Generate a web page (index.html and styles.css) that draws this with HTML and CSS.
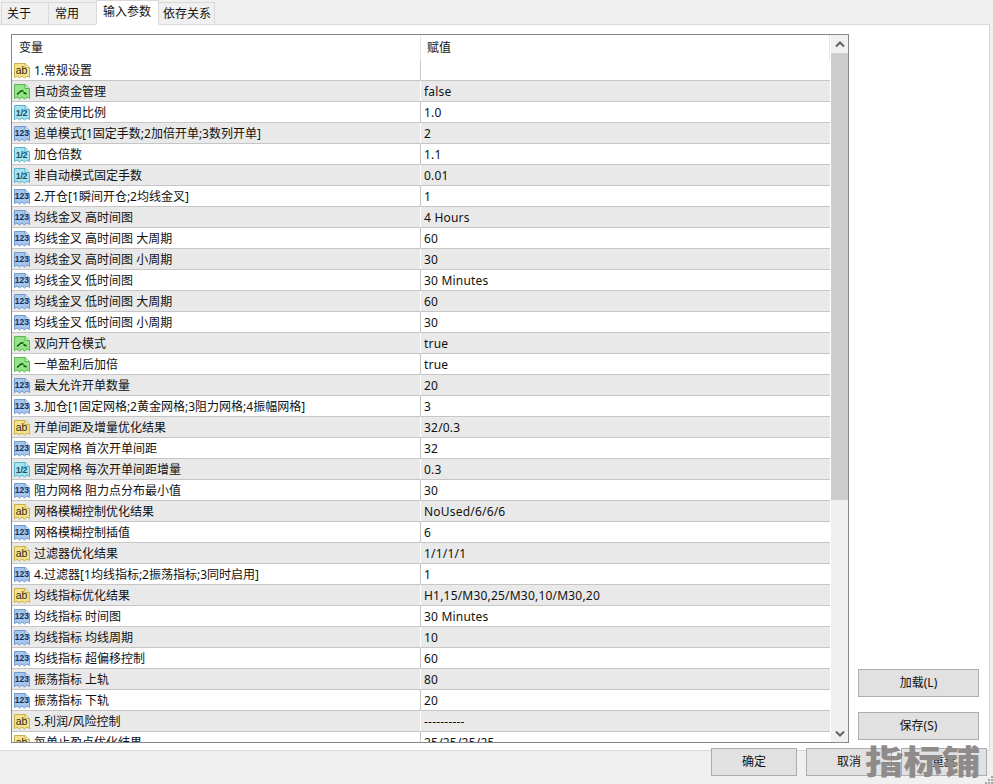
FILE: index.html
```html
<!DOCTYPE html>
<html lang="zh">
<head>
<meta charset="utf-8">
<title>输入参数</title>
<link rel="stylesheet" href="styles.css">
</head>
<body>
<svg class="defs" width="0" height="0">
  <defs>
    <symbol id="doc" viewBox="0 0 16 17"><path d="M0.5 1.5 H11 L15.5 5.5 V15.5 L13 14 L10.5 16 L8 14 L5.5 16 L3 14 L0.5 15.5 Z"/><path class="fold" d="M11 1.5 V5.5 H15.5"/></symbol>
  </defs>
</svg>
<nav class="tabs">
  <div class="tab">关于</div>
  <div class="tab">常用</div>
  <div class="tab active">输入参数</div>
  <div class="tab">依存关系</div>
</nav>
<main class="panel">
  <section class="list">
    <div class="rows">
      <div class="head"><div class="hname">变量</div><div class="hval">赋值</div></div>
      <div class="row"><svg class="ic ab" viewBox="0 0 16 17"><use href="#doc"/><text x="7.5" y="12">ab</text></svg><span class="name">1.常规设置</span><span class="val"></span></div>
      <div class="row"><svg class="ic bo" viewBox="0 0 16 17"><use href="#doc"/><path class="sw" d="M3 11.5 L7 8 H9.5 M9.5 9.5 L12.5 11"/></svg><span class="name">自动资金管理</span><span class="val">false</span></div>
      <div class="row"><svg class="ic fr" viewBox="0 0 16 17"><use href="#doc"/><text x="7.5" y="11.5">1/2</text></svg><span class="name">资金使用比例</span><span class="val">1.0</span></div>
      <div class="row"><svg class="ic nu" viewBox="0 0 16 17"><use href="#doc"/><text x="7.8" y="11">123</text></svg><span class="name">追单模式[1固定手数;2加倍开单;3数列开单]</span><span class="val">2</span></div>
      <div class="row"><svg class="ic fr" viewBox="0 0 16 17"><use href="#doc"/><text x="7.5" y="11.5">1/2</text></svg><span class="name">加仓倍数</span><span class="val">1.1</span></div>
      <div class="row"><svg class="ic fr" viewBox="0 0 16 17"><use href="#doc"/><text x="7.5" y="11.5">1/2</text></svg><span class="name">非自动模式固定手数</span><span class="val">0.01</span></div>
      <div class="row"><svg class="ic nu" viewBox="0 0 16 17"><use href="#doc"/><text x="7.8" y="11">123</text></svg><span class="name">2.开仓[1瞬间开仓;2均线金叉]</span><span class="val">1</span></div>
      <div class="row"><svg class="ic nu" viewBox="0 0 16 17"><use href="#doc"/><text x="7.8" y="11">123</text></svg><span class="name">均线金叉 高时间图</span><span class="val">4 Hours</span></div>
      <div class="row"><svg class="ic nu" viewBox="0 0 16 17"><use href="#doc"/><text x="7.8" y="11">123</text></svg><span class="name">均线金叉 高时间图 大周期</span><span class="val">60</span></div>
      <div class="row"><svg class="ic nu" viewBox="0 0 16 17"><use href="#doc"/><text x="7.8" y="11">123</text></svg><span class="name">均线金叉 高时间图 小周期</span><span class="val">30</span></div>
      <div class="row"><svg class="ic nu" viewBox="0 0 16 17"><use href="#doc"/><text x="7.8" y="11">123</text></svg><span class="name">均线金叉 低时间图</span><span class="val">30 Minutes</span></div>
      <div class="row"><svg class="ic nu" viewBox="0 0 16 17"><use href="#doc"/><text x="7.8" y="11">123</text></svg><span class="name">均线金叉 低时间图 大周期</span><span class="val">60</span></div>
      <div class="row"><svg class="ic nu" viewBox="0 0 16 17"><use href="#doc"/><text x="7.8" y="11">123</text></svg><span class="name">均线金叉 低时间图 小周期</span><span class="val">30</span></div>
      <div class="row"><svg class="ic bo" viewBox="0 0 16 17"><use href="#doc"/><path class="sw" d="M3 11.5 L7 8 H9.5 M9.5 9.5 L12.5 11"/></svg><span class="name">双向开仓模式</span><span class="val">true</span></div>
      <div class="row"><svg class="ic bo" viewBox="0 0 16 17"><use href="#doc"/><path class="sw" d="M3 11.5 L7 8 H9.5 M9.5 9.5 L12.5 11"/></svg><span class="name">一单盈利后加倍</span><span class="val">true</span></div>
      <div class="row"><svg class="ic nu" viewBox="0 0 16 17"><use href="#doc"/><text x="7.8" y="11">123</text></svg><span class="name">最大允许开单数量</span><span class="val">20</span></div>
      <div class="row"><svg class="ic nu" viewBox="0 0 16 17"><use href="#doc"/><text x="7.8" y="11">123</text></svg><span class="name">3.加仓[1固定网格;2黄金网格;3阻力网格;4振幅网格]</span><span class="val">3</span></div>
      <div class="row"><svg class="ic ab" viewBox="0 0 16 17"><use href="#doc"/><text x="7.5" y="12">ab</text></svg><span class="name">开单间距及增量优化结果</span><span class="val">32/0.3</span></div>
      <div class="row"><svg class="ic nu" viewBox="0 0 16 17"><use href="#doc"/><text x="7.8" y="11">123</text></svg><span class="name">固定网格 首次开单间距</span><span class="val">32</span></div>
      <div class="row"><svg class="ic fr" viewBox="0 0 16 17"><use href="#doc"/><text x="7.5" y="11.5">1/2</text></svg><span class="name">固定网格 每次开单间距增量</span><span class="val">0.3</span></div>
      <div class="row"><svg class="ic nu" viewBox="0 0 16 17"><use href="#doc"/><text x="7.8" y="11">123</text></svg><span class="name">阻力网格 阻力点分布最小值</span><span class="val">30</span></div>
      <div class="row"><svg class="ic ab" viewBox="0 0 16 17"><use href="#doc"/><text x="7.5" y="12">ab</text></svg><span class="name">网格模糊控制优化结果</span><span class="val">NoUsed/6/6/6</span></div>
      <div class="row"><svg class="ic nu" viewBox="0 0 16 17"><use href="#doc"/><text x="7.8" y="11">123</text></svg><span class="name">网格模糊控制插值</span><span class="val">6</span></div>
      <div class="row"><svg class="ic ab" viewBox="0 0 16 17"><use href="#doc"/><text x="7.5" y="12">ab</text></svg><span class="name">过滤器优化结果</span><span class="val">1/1/1/1</span></div>
      <div class="row"><svg class="ic nu" viewBox="0 0 16 17"><use href="#doc"/><text x="7.8" y="11">123</text></svg><span class="name">4.过滤器[1均线指标;2振荡指标;3同时启用]</span><span class="val">1</span></div>
      <div class="row"><svg class="ic ab" viewBox="0 0 16 17"><use href="#doc"/><text x="7.5" y="12">ab</text></svg><span class="name">均线指标优化结果</span><span class="val">H1,15/M30,25/M30,10/M30,20</span></div>
      <div class="row"><svg class="ic nu" viewBox="0 0 16 17"><use href="#doc"/><text x="7.8" y="11">123</text></svg><span class="name">均线指标 时间图</span><span class="val">30 Minutes</span></div>
      <div class="row"><svg class="ic nu" viewBox="0 0 16 17"><use href="#doc"/><text x="7.8" y="11">123</text></svg><span class="name">均线指标 均线周期</span><span class="val">10</span></div>
      <div class="row"><svg class="ic nu" viewBox="0 0 16 17"><use href="#doc"/><text x="7.8" y="11">123</text></svg><span class="name">均线指标 超偏移控制</span><span class="val">60</span></div>
      <div class="row"><svg class="ic nu" viewBox="0 0 16 17"><use href="#doc"/><text x="7.8" y="11">123</text></svg><span class="name">振荡指标 上轨</span><span class="val">80</span></div>
      <div class="row"><svg class="ic nu" viewBox="0 0 16 17"><use href="#doc"/><text x="7.8" y="11">123</text></svg><span class="name">振荡指标 下轨</span><span class="val">20</span></div>
      <div class="row"><svg class="ic ab" viewBox="0 0 16 17"><use href="#doc"/><text x="7.5" y="12">ab</text></svg><span class="name">5.利润/风险控制</span><span class="val">----------</span></div>
      <div class="row"><svg class="ic ab" viewBox="0 0 16 17"><use href="#doc"/><text x="7.5" y="12">ab</text></svg><span class="name">每单止盈点优化结果</span><span class="val">25/25/25/25</span></div>
    </div>
    <div class="scrollbar">
      <div class="sbtn"><svg width="10" height="7" viewBox="0 0 10 7"><path d="M1 5.5 L5 1.5 L9 5.5" /></svg></div>
      <div class="track"><div class="thumb"></div></div>
      <div class="sbtn"><svg width="10" height="7" viewBox="0 0 10 7"><path d="M1 1.5 L5 5.5 L9 1.5" /></svg></div>
    </div>
  </section>
  <aside class="side">
    <button class="btn wide">加载(L)</button>
    <button class="btn wide">保存(S)</button>
  </aside>
</main>
<footer class="foot">
  <button class="btn act">确定</button>
  <button class="btn act">取消</button>
  <button class="btn act">重置</button>
</footer>
<div class="mark">指标铺</div>
<svg class="grip" width="8" height="8" viewBox="0 0 8 8"><path d="M6 0h2v2h-2z M3 3h2v2h-2z M6 3h2v2h-2z M0 6h2v2h-2z M3 6h2v2h-2z M6 6h2v2h-2z"/></svg>
</body>
</html>
```
FILE: styles.css
```css
* { box-sizing: border-box; }
html, body { margin: 0; height: 784px; overflow: hidden; }
body {
  position: relative;
  display: flex;
  flex-direction: column;
  background: #f0f0f0;
  color: #111;
  font: 12px/16px "Noto Sans", "Noto Sans CJK SC", sans-serif;
}
.defs { position: absolute; }
.tabs { display: flex; height: 25px; padding: 2px 0 0 1px; flex: none; }
.tab {
  height: 23px;
  padding: 3px 0 0 6px;
  background: #f0f0f0;
  border: 1px solid #d9d9d9;
  border-bottom: 0;
  margin-left: -1px;
  white-space: nowrap;
}
.tab:nth-child(1) { width: 48px; margin-left: 0; padding-left: 5px; }
.tab:nth-child(2) { width: 49px; }
.tab:nth-child(3) { width: 63px; }
.tab:nth-child(4) { width: 57px; padding-left: 4px; }
.tab.active {
  position: relative;
  height: 25px;
  margin-top: -2px;
  background: #fff;
  padding: 3px 0 0 6px;
  border-bottom: 1px solid #fff;
  z-index: 1;
}
.panel {
  height: 727px;
  width: 990px;
  flex: none;
  display: flex;
  margin-top: -1px;
  padding: 9px 10px 7px 11px;
  background: #fff;
  border: 1px solid #d9d9d9;
  border-left: 0;
}
.list {
  width: 838px;
  height: 709px;
  flex: none;
  display: flex;
  border: 1px solid #828790;
  overflow: hidden;
}
.rows { flex: 1; min-width: 0; }
.head { display: flex; height: 25px; }
.hname { width: 409px; padding: 5px 0 0 7px; border-right: 1px solid #e5e5e5; }
.hval { flex: 1; padding: 5px 0 0 6px; border-right: 1px solid #e5e5e5; margin-right: 1px; }
.row {
  display: flex;
  align-items: flex-start;
  height: 21px;
  margin-right: 1px;
  border-bottom: 1px solid #c6c6c6;
}
.row:nth-child(odd) { background: #e9e9e9; }
.ic { width: 16px; height: 17px; margin: 2px 0 0 2px; flex: none; }
.ic text {
  font: 10.5px "Liberation Sans", sans-serif;
  text-anchor: middle;
  fill: #2a2a10;
  stroke: none;
}
.ic.nu text { font-size: 8.5px; font-weight: bold; fill: #12325e; }
.ic.fr text { font-size: 9px; font-weight: bold; letter-spacing: -0.4px; fill: #17506a; }
.ab { fill: #f5e38c; stroke: #c9b04a; }
.bo { fill: #93e486; stroke: #5ab552; }
.fr { fill: #a5e3f0; stroke: #5cb2cb; }
.nu { fill: #a6c6ee; stroke: #6f99cc; }
.fold { fill: #fff; fill-opacity: 0.55; }
.sw { fill: none; stroke: #0f4f0f; stroke-width: 1.4; }
.name {
  width: 391px;
  height: 20px;
  line-height: 22px;
  padding-left: 4px;
  flex: none;
  white-space: nowrap;
  border-right: 1px solid #c6c6c6;
}
.row:nth-child(odd) .name { border-right-color: #fff; }
.val { height: 20px; line-height: 22px; padding-left: 3px; white-space: nowrap; letter-spacing: 0.2px; }
.scrollbar {
  width: 17px;
  flex: none;
  display: flex;
  flex-direction: column;
  background: #f0f0f0;
}
.sbtn { height: 18px; flex: none; display: flex; align-items: center; justify-content: center; }
.sbtn path { fill: none; stroke: #606060; stroke-width: 2; }
.track { flex: 1; }
.thumb { height: 447px; background: #cdcdcd; }
.side {
  flex: 1;
  display: flex;
  flex-direction: column;
  justify-content: flex-end;
  align-items: flex-end;
  gap: 15px;
  padding-bottom: 3px;
}
.btn {
  background: #e1e1e1;
  border: 1px solid #adadad;
  color: #111;
  font: inherit;
  padding: 0;
}
.wide { width: 121px; height: 28px; }
.foot {
  flex: 1;
  display: flex;
  justify-content: flex-end;
  gap: 9px;
  padding: 0 6px 0 0;
  margin-top: -3px;
  align-items: flex-start;
}
.act { width: 86px; height: 28px; }
.mark {
  position: absolute;
  left: 865px;
  top: 738px;
  font: 900 38.5px/44px "Noto Sans CJK SC", sans-serif;
  color: #8f8b8b;
  transform: scaleY(0.85);
  white-space: nowrap;
}
.grip { position: absolute; right: 0; bottom: 0; fill: #a6a6a6; }
```
